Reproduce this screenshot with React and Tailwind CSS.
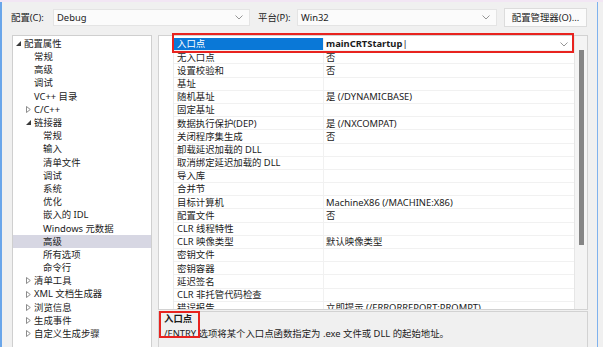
import React from "react";

const FONT = "font-['Noto_Sans','Noto_Sans_CJK_SC',sans-serif]";

const tree = [
  { t: "配置属性", lvl: 0, open: true },
  { t: "常规", lvl: 1 },
  { t: "高级", lvl: 1 },
  { t: "调试", lvl: 1 },
  { t: "VC++ 目录", lvl: 1 },
  { t: "C/C++", lvl: 1, closed: true },
  { t: "链接器", lvl: 1, open: true },
  { t: "常规", lvl: 2 },
  { t: "输入", lvl: 2 },
  { t: "清单文件", lvl: 2 },
  { t: "调试", lvl: 2 },
  { t: "系统", lvl: 2 },
  { t: "优化", lvl: 2 },
  { t: "嵌入的 IDL", lvl: 2 },
  { t: "Windows 元数据", lvl: 2 },
  { t: "高级", lvl: 2, sel: true },
  { t: "所有选项", lvl: 2 },
  { t: "命令行", lvl: 2 },
  { t: "清单工具", lvl: 1, closed: true },
  { t: "XML 文档生成器", lvl: 1, closed: true },
  { t: "浏览信息", lvl: 1, closed: true },
  { t: "生成事件", lvl: 1, closed: true },
  { t: "自定义生成步骤", lvl: 1, closed: true },
];

const props = [
  ["入口点", "mainCRTStartup"],
  ["无入口点", "否"],
  ["设置校验和", "否"],
  ["基址", ""],
  ["随机基址", "是 (/DYNAMICBASE)"],
  ["固定基址", ""],
  ["数据执行保护(DEP)", "是 (/NXCOMPAT)"],
  ["关闭程序集生成", "否"],
  ["卸载延迟加载的 DLL", ""],
  ["取消绑定延迟加载的 DLL", ""],
  ["导入库", ""],
  ["合并节", ""],
  ["目标计算机", "MachineX86 (/MACHINE:X86)"],
  ["配置文件", "否"],
  ["CLR 线程特性", ""],
  ["CLR 映像类型", "默认映像类型"],
  ["密钥文件", ""],
  ["密钥容器", ""],
  ["延迟签名", ""],
  ["CLR 非托管代码检查", ""],
  ["错误报告", "立即提示 (/ERRORREPORT:PROMPT)"],
];

const Chevron = () => (
  <svg width="8" height="5" viewBox="0 0 8 5" className="shrink-0">
    <polyline points="0.5,0.5 4,4 7.5,0.5" fill="none" stroke="#8a8a8a" strokeWidth="0.9" />
  </svg>
);

const Open = () => (
  <svg width="5" height="5" viewBox="0 0 5 5" className="shrink-0">
    <polygon points="5,0 5,5 0,5" fill="#3a3a3a" />
  </svg>
);

const Closed = () => (
  <svg width="5" height="7" viewBox="0 0 5 7" className="shrink-0">
    <polygon points="0.5,0.5 4.3,3.5 0.5,6.5" fill="none" stroke="#808080" strokeWidth="0.9" />
  </svg>
);

const Select = ({ value, w }) => (
  <div className={`${w} h-[17px] flex items-center justify-between pl-[3px] pr-[6px] bg-[#fbfbfb] border border-[#e4e4e4]`}>
    <span>{value}</span>
    <Chevron />
  </div>
);

export default function App() {
  return (
    <div className={`relative w-[603px] h-[347px] overflow-hidden bg-[#f0f0f0] text-[9.4px] leading-none text-[#1b1b1b] ${FONT}`}>
      <div className="absolute left-0 top-0 bottom-0 w-[2px] bg-[#6aa6ea]" />
      <div className="absolute right-[5px] top-0 bottom-0 w-[1px] bg-[#7fb2ee]" />
      <div className="absolute left-0 right-0 top-0 h-[2px] bg-[#f2e6f4]" />

      {/* top row */}
      <div className="flex items-center h-[19px] mt-[8px] pl-[11px]">
        <span className="w-[42px]">配置(C):</span>
        <Select value="Debug" w="w-[197px]" />
        <span className="ml-[8px] w-[39px]">平台(P):</span>
        <Select value="Win32" w="w-[200px]" />
        <div className="ml-[7px] w-[83px] h-[19px] flex items-center justify-center bg-[#fbfbfb] border border-[#dcdcdc]">
          配置管理器(O)...
        </div>
      </div>

      {/* body */}
      <div className="flex mt-[8px]">
        {/* tree */}
        <div className="ml-[12px] w-[140px] h-[320px] bg-white border border-[#cfcfcf] pt-[1px]">
          {tree.map((n, i) => (
            <div
              key={i}
              className={`h-[13.2px] flex items-center ${n.sel ? "bg-[#d7d7e3]" : ""}`}
            >
              {n.lvl === 0 && (
                <div className="flex items-center pl-[3px] gap-[3px]">
                  <Open />
                  <span>{n.t}</span>
                </div>
              )}
              {n.lvl === 1 && (
                <div className="flex items-center pl-[13px]">
                  <span className="w-[8px] flex items-center">
                    {n.open && <Open />}
                    {n.closed && <Closed />}
                  </span>
                  <span>{n.t}</span>
                </div>
              )}
              {n.lvl === 2 && <span className="pl-[30px]">{n.t}</span>}
            </div>
          ))}
        </div>

        {/* right side */}
        <div className="ml-[6px] w-[430px] flex flex-col">
          <div className="h-[275px] bg-white border border-[#d2d2d2] flex overflow-hidden">
            <div className="w-[15px] border-r border-[#ececec]" />
            <div className="w-[400px] pt-[2px]">
              {props.map(([k, v], i) => (
                <div key={i} className="h-[13.2px] flex border-b border-[#f1f1f1]">
                  <div
                    className={`w-[150px] flex items-center pl-[3px] border-r border-[#f1f1f1] ${
                      i === 0 ? "bg-[#0a78d7] text-white" : ""
                    }`}
                  >
                    {k}
                  </div>
                  <div className="flex-1 flex items-center justify-between pl-[2px] pr-[6px]">
                    {i === 0 ? (
                      <>
                        <span className="font-bold">
                          {v}
                          <span className="font-normal">|</span>
                        </span>
                        <Chevron />
                      </>
                    ) : (
                      <span>{v}</span>
                    )}
                  </div>
                </div>
              ))}
            </div>
            <div className="w-[13px] bg-[#f4f4f4] border-l border-[#e6e6e6] flex justify-center pt-[14px]">
              <div className="w-[5px] h-[195px] bg-[#858585]" />
            </div>
          </div>
          <div className="mt-[1px] h-[40px] border border-[#d2d2d2] bg-[#f0f0f0] pl-[5px] pt-[2px]">
            <div className="font-bold">入口点</div>
            <div className="mt-[6px]">/ENTRY 选项将某个入口点函数指定为 .exe 文件或 DLL 的起始地址。</div>
          </div>
        </div>
      </div>

      {/* red annotation boxes */}
      <div className="absolute left-[172px] top-[33px] w-[402px] h-[20px] border-2 border-[#e8231f]" />
      <div className="absolute left-[159px] top-[311px] w-[41px] h-[27px] border-2 border-[#e8231f]" />
    </div>
  );
}
